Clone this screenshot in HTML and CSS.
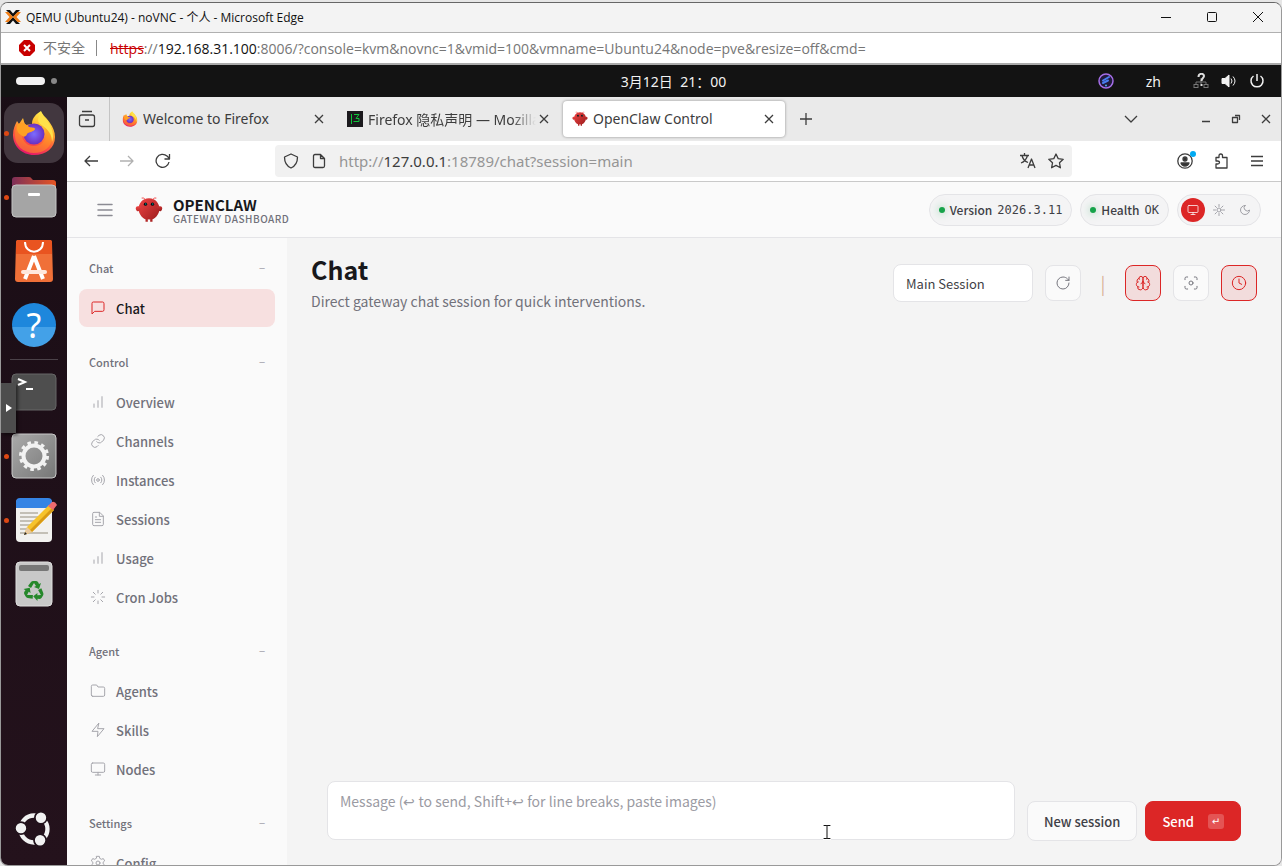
FILE: index.html
```html
<!DOCTYPE html>
<html lang="zh-CN">
<head>
    <meta charset="UTF-8">
    <meta name="viewport" content="width=device-width, initial-scale=1.0">
    <title>QEMU (Ubuntu24) - noVNC</title>
    <link rel="stylesheet" href="styles.css">
</head>
<body>
    <!-- shared icons -->
    <svg class="defs" aria-hidden="true">
        <defs>
            <linearGradient id="fox-body" x1="0.7" y1="0" x2="0.3" y2="1">
                <stop offset="0" stop-color="#fff44f"/>
                <stop offset="0.35" stop-color="#ffb02e"/>
                <stop offset="0.65" stop-color="#ff5a3c"/>
                <stop offset="1" stop-color="#e3106f"/>
            </linearGradient>
            <radialGradient id="fox-globe">
                <stop offset="0" stop-color="#7a6cff"/>
                <stop offset="1" stop-color="#6b2fc0"/>
            </radialGradient>
            <linearGradient id="claw-body" x1="0" y1="0" x2="1" y2="1">
                <stop offset="0" stop-color="#ef4444"/>
                <stop offset="1" stop-color="#991b1b"/>
            </linearGradient>
            <linearGradient id="grey" x1="0" y1="0" x2="1" y2="1">
                <stop offset="0" stop-color="#aaa"/>
                <stop offset="1" stop-color="#777"/>
            </linearGradient>
            <linearGradient id="folder-back">
                <stop offset="0" stop-color="#7d2f58"/>
                <stop offset="1" stop-color="#e65523"/>
            </linearGradient>
        </defs>
        <symbol id="i-firefox" viewBox="0 0 44 46">
            <path fill="url(#fox-body)" d="M29 1c2 5 6 7 9 12 3 4 5 9 5 14 0 11-9 18-21 18S1 36 1 25c0-6 2-10 4-14l2 3 4-6c1 3 1 5 3 7l6-1c0-6 4-10 9-13z"/>
            <circle cx="22" cy="24" r="10.500" fill="url(#fox-globe)"/>
            <path fill="#ff9a1f" d="M5 15c4-3 9-1 12 2 2 1 5 0 6 2-1 3-7 3-8 5-1 3-3 3-5 2 1 6 6 10 12 10 6 0 11-4 12-10 1-5-1-10-5-13 7 2 12 8 11 16-1 8-8 14-18 14C11 43 3 35 3 26c0-5 1-8 2-11z" opacity="0.500"/>
            <path fill="#ffa024" d="M6 14c4-2 8 0 11 3 2 1 6 0 6 2-1 3-7 3-8 5-1 3-4 3-6 1-4-2-5-7-3-11z"/>
            <path fill="#ffe14a" d="M29 2c2 5 6 8 9 13 3 6 4 12 2 17 0-8-4-12-9-16-5-3-7-6-2-14z"/>
        </symbol>
        <symbol id="i-claw" viewBox="0 0 120 120">
            <path fill="url(#claw-body)" d="M60 10C30 10 15 35 15 55s15 40 30 45v10h10v-10s5 2 10 0v10h10v-10c15-5 30-25 30-45S90 10 60 10z"/>
            <path fill="url(#claw-body)" d="M20 45C5 40 0 50 5 60s15 5 20-5-1-9-5-10zM100 45c15-5 20 5 15 15s-15 5-20-5 1-9 5-10z"/>
            <path d="M45 15Q35 5 30 8M75 15Q85 5 90 8" stroke="#ef4444" stroke-width="4" fill="none" stroke-linecap="round"/>
            <circle cx="45" cy="35" r="7" fill="#050810"/>
            <circle cx="75" cy="35" r="7" fill="#050810"/>
            <circle cx="46" cy="34" r="3" fill="#00a896"/>
            <circle cx="76" cy="34" r="3" fill="#00a896"/>
        </symbol>
        <symbol id="i-x" viewBox="0 0 16 16"><path d="M4 4l8 8M12 4l-8 8"/></symbol>
        <symbol id="i-bars" viewBox="0 0 24 24"><path d="M6 20v-5M12 20V10M18 20V4"/></symbol>
        <symbol id="i-monitor" viewBox="0 0 24 24"><rect x="2" y="3" width="20" height="14" rx="2"/><path d="M8 21h8M12 17v4"/></symbol>
    </svg>

    <div class="window">
        <header class="titlebar">
            <svg class="proxmox" viewBox="0 0 16 16"><path d="M1 1h4l3 3.500L11 1h4L8 8zM1 15h4l3-3.500L11 15h4L8 8z" fill="#111"/><path d="M0 3h3.500L8 8l-4.500 5H0l4.500-5zM16 3h-3.500L8 8l4.500 5H16l-4.500-5z" fill="#ef7d16"/></svg>
            <span class="window-title">QEMU (Ubuntu24) - noVNC - 个人 - Microsoft Edge</span>
            <div class="window-buttons">
                <button type="button" aria-label="Minimize"><svg viewBox="0 0 12 12"><path d="M1 6.500h10"/></svg></button>
                <button type="button" aria-label="Maximize"><svg viewBox="0 0 12 12"><rect x="1.500" y="1.500" width="9" height="9" rx="1"/></svg></button>
                <button type="button" aria-label="Close"><svg viewBox="0 0 12 12"><path d="M1 1l10 10M11 1L1 11"/></svg></button>
            </div>
        </header>
        <div class="addressbar">
            <svg class="unsafe" viewBox="0 0 16 16"><path d="M5 0h6l5 5v6l-5 5H5l-5-5V5z" fill="#c80000"/><path d="M5 5l6 6M11 5l-6 6" stroke="#fff" stroke-width="2"/></svg>
            <span class="unsafe-label">不安全</span>
            <span class="address"><s>https</s>://<b>192.168.31.100</b>:8006/?console=kvm&amp;novnc=1&amp;vmid=100&amp;vmname=Ubuntu24&amp;node=pve&amp;resize=off&amp;cmd=</span>
        </div>

        <div class="desktop">
            <div class="topbar">
                <div class="workspaces"><i class="ws-active"></i><i class="ws-dot"></i></div>
                <time class="clock">3月12日&nbsp; 21：00</time>
                <div class="tray">
                    <svg class="tray-app" viewBox="0 0 16 16"><circle cx="8" cy="8" r="7" fill="#211a3d" stroke="#a56ee8" stroke-width="1.500"/><path d="M5 7.500l6-3.500M5 10l5-2.500" stroke="#4a7df0" stroke-width="2" stroke-linecap="round"/><circle cx="8" cy="12.500" r="1" fill="#4ab0f0"/></svg>
                    <span class="lang">zh</span>
                    <svg viewBox="0 0 16 16" fill="none" stroke="#777"><path d="M8 5v6M3 11V9h10v2"/><rect x="1" y="11.500" width="4" height="3"/><rect x="11" y="11.500" width="4" height="3"/><path d="M5.500 4c0-4 5.500-4 5.500-1 0 2-2.500 2-2.500 5M8.500 11v2" stroke="#ddd" stroke-width="2"/></svg>
                    <svg viewBox="0 0 16 16" fill="none" stroke="#f2f2f2"><path d="M1 5.500h3L8 2v12l-4-3.500H1z" fill="#f2f2f2"/><path d="M10 5.500q2 2.500 0 5M12 3.500q4 4.500 0 9"/></svg>
                    <svg viewBox="0 0 16 16" fill="none" stroke="#f2f2f2" stroke-width="1.500"><path d="M8 1v7M4.500 3a6 6 0 1 0 7 0"/></svg>
                </div>
            </div>

            <div class="workspace">
                <nav class="dock" aria-label="Dock">
                    <a href="#" class="dock-item current running" aria-label="Firefox"><svg viewBox="0 0 44 46"><use href="#i-firefox"/></svg></a>
                    <a href="#" class="dock-item running" aria-label="Files">
                        <svg viewBox="0 0 46 46"><path d="M1 20V6q0-3 3-3h14q2 0 3 2l1 1h20q3 0 3 3v11z" fill="url(#folder-back)"/><rect x="1" y="11" width="44" height="32" rx="4" fill="#a5a5a5" stroke="#c4c4c4"/><rect x="17" y="19" width="12" height="3" rx="1" fill="#fff"/></svg>
                    </a>
                    <a href="#" class="dock-item" aria-label="App Center">
                        <svg viewBox="0 0 46 46"><path d="M7 2h32q2 0 2 3l1 36q0 3-3 3H7q-3 0-3-3L5 5q0-3 2-3z" fill="#f07038"/><path d="M7 2h32q2 0 2 3v11H5V5q0-3 2-3z" fill="#e95420"/><path d="M14 4c0 13 18 13 18 0" fill="none" stroke="#fff" stroke-width="2"/><path d="M23 18l-9 23M23 18l9 23" stroke="#fff" stroke-width="4"/><path d="M12 34h22" stroke="#ffe8dc" stroke-width="4" stroke-linecap="round"/></svg>
                    </a>
                    <a href="#" class="dock-item" aria-label="Help"><span class="help-icon">?</span></a>
                    <hr class="dock-line">
                    <a href="#" class="dock-item" aria-label="Terminal">
                        <svg viewBox="0 0 46 46"><rect x="1" y="5" width="44" height="36" rx="4" fill="#4e4e4e" stroke="#666"/><path d="M7 10l7 3-7 3M15 20h7" fill="none" stroke="#fff" stroke-width="2"/></svg>
                    </a>
                    <a href="#" class="dock-item running" aria-label="Settings">
                        <svg viewBox="0 0 46 46"><rect x="1" y="1" width="44" height="44" rx="4" fill="url(#grey)" stroke="#c8c8c8"/><circle cx="23" cy="23" r="10.500" fill="none" stroke="#f2f2f2" stroke-width="4"/><circle cx="23" cy="23" r="13.500" fill="none" stroke="#f2f2f2" stroke-width="3" stroke-dasharray="3.600 3.468"/></svg>
                    </a>
                    <a href="#" class="dock-item running" aria-label="Text Editor">
                        <svg viewBox="0 0 46 46"><rect x="5" y="2" width="36" height="43" rx="4" fill="#f2f1ef"/><path d="M9 1h28q4 0 4 4v6H5V5q0-4 4-4z" fill="#3584e4"/><path d="M9 16h18M9 20h24M9 24h20M9 28h18M9 32h14M9 36h28" stroke="#c3bfb6" stroke-width="2"/><path d="M13 38l3-8L38 8l5 5-22 22z" fill="#f6c32c"/><path d="M19 33L41 11l2 2-22 22z" fill="#d99a14"/><path d="M13 38l3-8 5 5z" fill="#e9c9a0"/><path d="M13 38l1-3 2 2z" fill="#222"/><path d="M37 9l4-4q3-1 5 3l-4 5z" fill="#ed6a6f"/></svg>
                    </a>
                    <a href="#" class="dock-item" aria-label="Trash">
                        <svg viewBox="0 0 46 46">
                            <rect x="5" y="1" width="36" height="44" rx="4" fill="#c8c8c8" stroke="#dedede"/>
                            <rect x="8" y="4" width="30" height="6" rx="2" fill="#777"/>
                            <g id="recycle" fill="#26882b"><path d="M17 25l3-4q1-1 2-1h3q1 0 2 1l1 2 2-1-2 6-5-2 2-1-2-3-3 5z"/></g>
                            <use href="#recycle" transform="rotate(120 23 30)"/>
                            <use href="#recycle" transform="rotate(240 23 30)"/>
                        </svg>
                    </a>
                    <a href="#" class="dock-item dock-apps" aria-label="Show Apps">
                        <svg viewBox="0 0 46 46"><circle cx="23" cy="23" r="15.500" fill="none" stroke="#f2f2f2" stroke-width="5"/><g fill="#f2f2f2" stroke="#22131c" stroke-width="2"><circle cx="8" cy="22" r="7"/><circle cx="31" cy="10" r="7"/><circle cx="30" cy="36" r="7"/></g></svg>
                    </a>
                    <button type="button" class="vnc-handle" aria-label="noVNC panel"><svg viewBox="0 0 6 8"><path d="M0 0l6 4-6 4z" fill="#fff"/></svg></button>
                </nav>

                <div class="firefox">
                    <div class="tabstrip">
                        <button type="button" class="tab-list" aria-label="Recent browsing"><svg class="line" viewBox="0 0 18 18"><rect x="1.500" y="5" width="15" height="11.500" rx="2"/><path d="M4 1.500h10M7 10h4"/></svg></button>
                        <div class="tab">
                            <svg class="favicon" viewBox="0 0 44 46"><use href="#i-firefox"/></svg>
                            <span class="tab-text">Welcome to Firefox</span>
                            <button type="button" class="tab-close" aria-label="Close tab"><svg class="line"><use href="#i-x"/></svg></button>
                        </div>
                        <div class="tab">
                            <svg class="favicon" viewBox="0 0 16 16"><path d="M0 0h16v16H0z" fill="#1c1a1e"/><path d="M4.500 3v10M7 3.500h5L9 7.500h3v3H6.500" fill="none" stroke="#0fc43a"/></svg>
                            <span class="tab-text fade">Firefox 隐私声明 — Mozilla</span>
                            <button type="button" class="tab-close" aria-label="Close tab"><svg class="line"><use href="#i-x"/></svg></button>
                        </div>
                        <div class="tab active">
                            <svg class="favicon" viewBox="0 0 120 120"><use href="#i-claw"/></svg>
                            <span class="tab-text">OpenClaw Control</span>
                            <button type="button" class="tab-close" aria-label="Close tab"><svg class="line"><use href="#i-x"/></svg></button>
                        </div>
                        <button type="button" class="new-tab" aria-label="New tab"><svg class="line" viewBox="0 0 16 16"><path d="M8 2v12M2 8h12"/></svg></button>
                        <div class="tab-controls">
                            <button type="button" class="all-tabs" aria-label="List all tabs"><svg class="line" viewBox="0 0 16 16"><path d="M2 5l6 6 6-6"/></svg></button>
                            <button type="button" aria-label="Minimize"><svg class="line" viewBox="0 0 16 16"><path d="M4 10.500h8"/></svg></button>
                            <button type="button" aria-label="Restore"><svg class="line" viewBox="0 0 16 16"><path d="M4.500 6.500h5v5h-5zM7 4.500h4.500V9"/></svg></button>
                            <button type="button" aria-label="Close"><svg class="line"><use href="#i-x"/></svg></button>
                        </div>
                    </div>

                    <div class="toolbar">
                        <button type="button" aria-label="Back"><svg class="line" viewBox="0 0 16 16"><path d="M15 8H2M7 3L2 8l5 5"/></svg></button>
                        <button type="button" aria-label="Forward" disabled><svg class="line" viewBox="0 0 16 16"><path d="M1 8h13M9 3l5 5-5 5"/></svg></button>
                        <button type="button" aria-label="Reload"><svg class="line" viewBox="0 0 16 16"><path d="M14 9a6.500 6.500 0 1 1-2-6l2 2M14.500 1v5h-5"/></svg></button>
                        <div class="urlbar">
                            <svg class="line" viewBox="0 0 16 16"><path d="M8 1l6.500 3c0 5-2 9-6.500 11C3.500 13 1.500 9 1.500 4z"/></svg>
                            <svg class="line" viewBox="0 0 16 16"><path d="M4 1.500h5.500l4 4V13q0 1.500-1.500 1.500H4q-1.500 0-1.500-1.500V3Q2.500 1.500 4 1.500zM9.500 1.500v4h4"/></svg>
                            <span class="url">http://<b>127.0.0.1</b>:18789/chat?session=main</span>
                            <svg class="line" viewBox="0 0 16 16"><path d="M0 2.500h9M4.500 0v2.500M2 2.500q1 5 6 7M7.500 2.500Q6 8 1 10M8 15l3.500-9L15 15M9.500 12h4"/></svg>
                            <svg class="line" viewBox="0 0 16 16"><path d="M8 1l2.200 4.600 5 .7-3.700 3.500.9 5L8 12.400l-4.400 2.400.9-5L.8 6.300l5-.7z"/></svg>
                        </div>
                        <button type="button" class="account" aria-label="Account"><svg class="line" viewBox="0 0 16 16"><circle cx="8" cy="8" r="7.200"/><circle cx="8" cy="6" r="2" fill="#333"/><path d="M4 10h8q-1 3-4 3t-4-3z" fill="#333"/></svg></button>
                        <button type="button" aria-label="Extensions"><svg class="line" viewBox="0 0 16 16"><path d="M6 4.500V3q0-2 1.800-2T9.500 3v1.500H14V15H3v-4h1.500q2 0 2-1.500T4.500 8H3V4.500z"/></svg></button>
                        <button type="button" aria-label="Menu"><svg class="line" viewBox="0 0 16 16"><path d="M2 3.500h12M2 8h12M2 12.500h12"/></svg></button>
                    </div>

                    <div class="app">
                        <header class="app-header">
                            <button type="button" class="menu-toggle" aria-label="Collapse sidebar"><svg viewBox="0 0 16 16"><path d="M1 2.500h14M1 8h14M1 13.500h14"/></svg></button>
                            <svg class="brand-logo" viewBox="0 0 120 120"><use href="#i-claw"/></svg>
                            <div class="brand">
                                <strong>OPENCLAW</strong>
                                <span>GATEWAY DASHBOARD</span>
                            </div>
                            <div class="status">
                                <div class="pill"><i class="dot"></i><span>Version</span><code>2026.3.11</code></div>
                                <div class="pill"><i class="dot"></i><span>Health</span><code>OK</code></div>
                                <div class="theme">
                                    <button type="button" class="on" aria-label="System theme"><svg><use href="#i-monitor"/></svg></button>
                                    <button type="button" aria-label="Light theme"><svg viewBox="0 0 24 24"><circle cx="12" cy="12" r="4"/><path d="M12 1v4M12 19v4M1 12h4M19 12h4M4.200 4.200L7 7M17 17l2.800 2.800M4.200 19.800L7 17M17 7l2.800-2.800"/></svg></button>
                                    <button type="button" aria-label="Dark theme"><svg viewBox="0 0 24 24"><path d="M12 3a6 6 0 0 0 9 9 9 9 0 1 1-9-9z"/></svg></button>
                                </div>
                            </div>
                        </header>

                        <div class="app-body">
                            <nav class="sidebar" aria-label="Dashboard">
                                <section class="nav-group">
                                    <button type="button" class="nav-label">Chat <span>−</span></button>
                                    <a href="#" class="nav-item active"><svg viewBox="0 0 24 24"><path d="M21 15a2 2 0 0 1-2 2H7l-4 4V5a2 2 0 0 1 2-2h14a2 2 0 0 1 2 2z"/></svg>Chat</a>
                                </section>
                                <section class="nav-group">
                                    <button type="button" class="nav-label">Control <span>−</span></button>
                                    <a href="#" class="nav-item"><svg><use href="#i-bars"/></svg>Overview</a>
                                    <a href="#" class="nav-item"><svg viewBox="0 0 24 24"><path d="M10 13a5 5 0 0 0 7.500.500l3-3a5 5 0 0 0-7-7l-1.800 1.700"/><path d="M14 11a5 5 0 0 0-7.500-.500l-3 3a5 5 0 0 0 7 7l1.700-1.700"/></svg>Channels</a>
                                    <a href="#" class="nav-item"><svg viewBox="0 0 24 24"><circle cx="12" cy="12" r="2"/><path d="M16.200 7.800a6 6 0 0 1 0 8.400M7.800 16.200a6 6 0 0 1 0-8.400M19 5a10 10 0 0 1 0 14M5 19A10 10 0 0 1 5 5"/></svg>Instances</a>
                                    <a href="#" class="nav-item"><svg viewBox="0 0 24 24"><path d="M14 2H6a2 2 0 0 0-2 2v16a2 2 0 0 0 2 2h12a2 2 0 0 0 2-2V8zM14 2v6h6M16 13H8M16 17H8M10 9H8"/></svg>Sessions</a>
                                    <a href="#" class="nav-item"><svg><use href="#i-bars"/></svg>Usage</a>
                                    <a href="#" class="nav-item"><svg viewBox="0 0 24 24"><path d="M12 2v4M12 18v4M4.900 4.900l2.900 2.900M16.200 16.200l2.900 2.900M2 12h4M18 12h4M4.900 19.100l2.900-2.900M16.200 7.800l2.900-2.900"/></svg>Cron Jobs</a>
                                </section>
                                <section class="nav-group">
                                    <button type="button" class="nav-label">Agent <span>−</span></button>
                                    <a href="#" class="nav-item"><svg viewBox="0 0 24 24"><path d="M4 20h16a2 2 0 0 0 2-2V8a2 2 0 0 0-2-2h-8L10 3H4a2 2 0 0 0-2 2v13a2 2 0 0 0 2 2z"/></svg>Agents</a>
                                    <a href="#" class="nav-item"><svg viewBox="0 0 24 24"><path d="M13 2L3 14h9l-1 8 10-12h-9z"/></svg>Skills</a>
                                    <a href="#" class="nav-item"><svg><use href="#i-monitor"/></svg>Nodes</a>
                                </section>
                                <section class="nav-group">
                                    <button type="button" class="nav-label">Settings <span>−</span></button>
                                    <a href="#" class="nav-item"><svg viewBox="0 0 24 24"><circle cx="12" cy="12" r="3"/><path d="M10 2h4l.600 3 2.400 1.400 3-1 2 3.400-2.300 2v2.400l2.300 2-2 3.400-3-1-2.400 1.400-.600 3h-4l-.600-3L7 17.600l-3 1-2-3.400 2.300-2v-2.400L2 8.800l2-3.400 3 1L9.400 5z"/></svg>Config</a>
                                </section>
                            </nav>

                            <main class="chat">
                                <div class="chat-head">
                                    <div class="chat-title">
                                        <h1>Chat</h1>
                                        <p>Direct gateway chat session for quick interventions.</p>
                                    </div>
                                    <div class="chat-tools">
                                        <select class="session" aria-label="Session"><option>Main Session</option></select>
                                        <button type="button" class="tool" aria-label="Refresh"><svg viewBox="0 0 24 24"><path d="M21 12a9 9 0 1 1-9-9c2.500 0 5 1 6.700 2.700L21 8M21 3v5h-5"/></svg></button>
                                        <span class="divider">|</span>
                                        <button type="button" class="tool on" aria-label="Toggle thinking"><svg viewBox="0 0 24 24"><path d="M12 5a3 3 0 1 0-6 .100 4 4 0 0 0-2.500 5.800 4 4 0 0 0 .600 6.600A4 4 0 1 0 12 18zM12 5a3 3 0 1 1 6 .100 4 4 0 0 1 2.500 5.800 4 4 0 0 1-.600 6.600A4 4 0 1 1 12 18zM15 13a4.500 4.500 0 0 1-3-4 4.500 4.500 0 0 1-3 4M17.600 6.500q.500-.600.400-1.400M6 5.100q0 .800.400 1.400M3.500 10.900l1.500-.500M20.500 10.900l-1.500-.500M6 18l-1.900-.500M18 18l1.900-.500"/></svg></button>
                                        <button type="button" class="tool" aria-label="Focus mode"><svg viewBox="0 0 24 24"><circle cx="12" cy="12" r="3"/><path d="M3 7V5a2 2 0 0 1 2-2h2M17 3h2a2 2 0 0 1 2 2v2M21 17v2a2 2 0 0 1-2 2h-2M7 21H5a2 2 0 0 1-2-2v-2"/></svg></button>
                                        <button type="button" class="tool on" aria-label="Toggle cron sessions"><svg viewBox="0 0 24 24"><circle cx="12" cy="12" r="10"/><path d="M12 6v6l4 2"/></svg></button>
                                    </div>
                                </div>
                                <form class="compose">
                                    <textarea aria-label="Message" placeholder="Message (↩ to send, Shift+↩ for line breaks, paste images)"></textarea>
                                    <button type="button" class="btn">New session</button>
                                    <button type="button" class="btn primary">Send <kbd>↵</kbd></button>
                                </form>
                                <svg class="pointer" viewBox="0 0 8 16"><path d="M1 1.500h6M1 14.500h6M4 2v12" stroke="#fff" stroke-width="3"/><path d="M1 1.500h2.500M4.500 1.500H7M1 14.500h2.500M4.500 14.500H7M4 2v12" stroke="#111"/></svg>
                            </main>
                        </div>
                    </div>
                </div>
            </div>
        </div>
    </div>
</body>
</html>
```
FILE: styles.css
```css
* {
    box-sizing: border-box;
}
body {
    margin: 0;
    height: 100vh;
    padding-top: 2px;
    background-color: #e6e6e6;
    font-family: 'Noto Sans', 'Noto Sans CJK SC', sans-serif;
}
button {
    display: flex;
    align-items: center;
    justify-content: center;
    padding: 0;
    border: 0;
    background: none;
    color: inherit;
    font: inherit;
}
a {
    color: inherit;
    text-decoration: none;
}
svg {
    display: block;
    flex: none;
    width: 16px;
    height: 16px;
}
.defs {
    position: absolute;
    width: 0;
    height: 0;
}
.line {
    fill: none;
    stroke: #3d3d3d;
    stroke-width: 1.3;
    stroke-linejoin: round;
}

/* host window */
.window {
    display: flex;
    flex-direction: column;
    height: 100%;
    border: 1px solid #999;
    border-top-color: #666;
    border-radius: 8px;
    overflow: hidden;
    background-color: #fff;
}
.titlebar {
    display: flex;
    align-items: center;
    gap: 5px;
    height: 30px;
    padding: 0 0 2px 4px;
    border-bottom: 1px solid #b0b0b0;
    background-color: #f3f3f3;
    color: #111;
    font-family: 'Open Sans', 'Noto Sans CJK SC', sans-serif;
    font-size: 12px;
}
.window-buttons {
    display: flex;
    margin-left: auto;
}
.window-buttons button {
    width: 46px;
    height: 28px;
}
.window-buttons svg {
    width: 12px;
    height: 12px;
    fill: none;
    stroke: #111;
}
.addressbar {
    display: flex;
    align-items: center;
    height: 32px;
    padding-left: 18px;
    border-bottom: 2px solid #aaa;
    color: #767676;
    font-family: 'Open Sans', 'Noto Sans CJK SC', sans-serif;
    font-size: 14px;
}
.unsafe-label {
    margin-left: 8px;
    padding-right: 11px;
    border-right: 1px solid #888;
    line-height: 16px;
}
.address {
    margin-left: 13px;
    white-space: nowrap;
}
.address s {
    color: #c80000;
}
.address b {
    color: #111;
    font-weight: 400;
}

/* ubuntu desktop */
.desktop {
    display: flex;
    flex-direction: column;
    flex: 1;
    min-height: 0;
    background: linear-gradient(#190d15, #24121c);
}
.topbar {
    display: grid;
    grid-template-columns: 1fr auto 1fr;
    align-items: center;
    height: 32px;
    padding: 0 16px 0 15px;
    background-color: #131313;
    color: #f2f2f2;
    font-size: 14px;
}
.workspaces {
    display: flex;
    align-items: center;
    gap: 6px;
}
.ws-active {
    width: 29px;
    height: 8px;
    border-radius: 4px;
    background-color: #f2f2f2;
}
.ws-dot {
    width: 6px;
    height: 6px;
    border-radius: 50%;
    background-color: #888;
}
.clock {
    margin-left: 66px;
}
.tray {
    display: flex;
    align-items: center;
    justify-content: flex-end;
    gap: 12px;
}
.lang {
    margin: 0 20px;
}
.workspace {
    display: flex;
    flex: 1;
    min-height: 0;
}
.dock {
    position: relative;
    display: flex;
    flex-direction: column;
    align-items: center;
    width: 66px;
    padding: 6px 3px;
}
.dock-item {
    position: relative;
    display: flex;
    align-items: center;
    justify-content: center;
    width: 60px;
    height: 60px;
    margin-bottom: 4px;
    border-radius: 14px;
}
.dock-item svg {
    width: 46px;
    height: 46px;
}
.dock-item.current {
    background-color: #42373f;
}
.dock-item.running::before {
    content: "";
    position: absolute;
    left: 0;
    top: 28px;
    width: 5px;
    height: 5px;
    border-radius: 50%;
    background-color: #dd4814;
}
.help-icon {
    width: 44px;
    height: 44px;
    border-radius: 50%;
    background: linear-gradient(#1e87dc 55%, #43a1e8 55%);
    color: #fff;
    font-size: 34px;
    line-height: 44px;
    text-align: center;
}
.dock-line {
    width: 48px;
    margin: 0 0 2px;
    border: 0;
    border-top: 1px solid #4b4249;
}
.dock-item.dock-apps {
    margin: auto 0 0;
}
.dock-apps svg {
    width: 40px;
    height: 40px;
}
.vnc-handle {
    position: absolute;
    left: 0;
    top: 286px;
    width: 15px;
    height: 50px;
    background-color: #4d4d4d;
    box-shadow: 2px 2px 3px rgba(0, 0, 0, 0.5);
}
.vnc-handle svg {
    width: 6px;
    height: 8px;
}

/* firefox */
.firefox {
    display: flex;
    flex-direction: column;
    flex: 1;
    min-width: 0;
    background-color: #fff;
    color: #3d3d3d;
    font-size: 15px;
}
.tabstrip {
    display: flex;
    align-items: center;
    gap: 3px;
    height: 44px;
    background-color: #eaeaea;
    font-size: 14px;
}
.tab-list {
    width: 43px;
    height: 44px;
    padding-right: 2px;
    border-right: 1px solid #c4c4c4;
}
.tab-list svg {
    width: 18px;
    height: 18px;
}
.tab {
    display: flex;
    align-items: center;
    width: 222px;
    height: 36px;
    padding: 0 8px 0 9px;
    border-radius: 4px;
}
.tab.active {
    background-color: #fff;
    box-shadow: 0 0 3px rgba(0, 0, 0, 0.4);
}
.tab-text {
    flex: 1;
    margin-left: 5px;
    padding-bottom: 1px;
    overflow: hidden;
    white-space: nowrap;
}
.tab-text.fade {
    mask-image: linear-gradient(to left, transparent, #000 24px);
}
.new-tab {
    width: 36px;
    height: 36px;
}
.tab-controls {
    display: flex;
    gap: 14px;
    margin-left: auto;
    padding-right: 7px;
}
.all-tabs {
    margin-right: 45px;
}
.toolbar {
    display: flex;
    align-items: center;
    height: 41px;
    padding: 0 6px;
    border-bottom: 1px solid #c9c9c9;
}
.toolbar button {
    width: 36px;
    height: 36px;
}
.toolbar button:disabled {
    opacity: 0.4;
}
.urlbar {
    display: flex;
    flex: 1;
    align-items: center;
    gap: 12px;
    height: 32px;
    margin: 0 95px 0 94px;
    padding: 0 8px;
    border-radius: 4px;
    background-color: #f1f1f1;
}
.url {
    flex: 1;
    padding-bottom: 1px;
    color: #959595;
}
.url b {
    color: #3d3d3d;
    font-weight: 400;
}
.account {
    position: relative;
}
.account::after {
    content: "";
    position: absolute;
    right: 7px;
    top: 8px;
    width: 6px;
    height: 6px;
    border-radius: 50%;
    background-color: #00aaf2;
}

/* openclaw dashboard */
.app {
    display: flex;
    flex-direction: column;
    flex: 1;
    min-height: 0;
    background-color: #f4f4f4;
    color: #3f3f46;
    font-family: 'Noto Sans CJK SC', sans-serif;
    font-size: 13px;
}
.app svg {
    stroke-linecap: round;
    stroke-linejoin: round;
}
.app-header {
    display: flex;
    align-items: center;
    height: 56px;
    padding: 0 20px;
    border-bottom: 1px solid #e4e4e7;
    background-color: #fafafa;
}
.menu-toggle {
    width: 36px;
    height: 36px;
}
.menu-toggle svg {
    fill: none;
    stroke: #8b8b93;
    stroke-width: 1.5;
}
.brand-logo {
    width: 28px;
    height: 28px;
    margin: 0 10px 0 12px;
}
.brand {
    display: flex;
    flex-direction: column;
    padding-top: 2px;
}
.brand strong {
    color: #18181b;
    font-size: 15px;
    line-height: 16px;
}
.brand span {
    color: #71717a;
    font-size: 10px;
    font-weight: 500;
    letter-spacing: 0.05em;
    line-height: 12px;
}
.status {
    display: flex;
    gap: 8px;
    margin-left: auto;
}
.pill,
.theme {
    display: flex;
    align-items: center;
    height: 32px;
    border: 1px solid #e4e4e7;
    border-radius: 16px;
    background-color: #f4f4f5;
}
.pill {
    gap: 5px;
    padding: 0 9px;
    font-size: 12px;
    font-weight: 500;
}
.pill code {
    font-family: 'DejaVu Sans Mono', monospace;
    font-size: 12px;
    font-weight: 400;
}
.dot {
    width: 6px;
    height: 6px;
    border-radius: 50%;
    background-color: #16a34a;
    box-shadow: 0 0 8px rgba(22, 163, 74, 0.5);
}
.theme {
    gap: 2px;
    padding: 0 3px;
}
.theme button {
    width: 24px;
    height: 24px;
    border-radius: 50%;
}
.theme svg {
    width: 12px;
    height: 12px;
    fill: none;
    stroke: #85858d;
    stroke-width: 1.5;
}
.theme .on {
    background-color: #dc2626;
}
.theme .on svg {
    stroke: #fff;
}
.app-body {
    display: flex;
    flex: 1;
    min-height: 0;
}
.sidebar {
    width: 220px;
    padding: 13px 12px 0;
    overflow: hidden;
    background-color: #fafafa;
    color: #71717a;
    font-weight: 500;
}
.nav-group {
    display: flex;
    flex-direction: column;
    gap: 1px;
    margin-bottom: 18px;
}
.nav-label {
    justify-content: space-between;
    height: 37px;
    padding: 0 10px 4px;
    font-size: 11px;
}
.nav-label span {
    color: #a1a1aa;
    font-weight: 400;
}
.nav-item {
    display: flex;
    align-items: center;
    gap: 10px;
    height: 38px;
    padding: 0 11px;
    border-radius: 8px;
}
.nav-item svg {
    fill: none;
    stroke: #a6a6ac;
    stroke-width: 1.5;
}
.nav-item.active {
    background-color: #f7e0e0;
    color: #18181b;
}
.nav-item.active svg {
    stroke: #dc2626;
}
.chat {
    position: relative;
    display: flex;
    flex: 1;
    flex-direction: column;
    justify-content: space-between;
    min-width: 0;
    padding: 12px 24px 24px;
}
.chat-head {
    display: flex;
    justify-content: space-between;
}
.chat-title h1 {
    margin: 0;
    color: #18181b;
    font-size: 25px;
    line-height: 39px;
}
.chat-title p {
    margin: 0;
    color: #71717a;
    font-size: 14px;
    line-height: 24px;
}
.chat-tools {
    display: flex;
    align-items: center;
    gap: 12px;
    height: 40px;
    margin-top: 13px;
}
.session {
    width: 140px;
    height: 38px;
    padding: 0 12px;
    border: 1px solid #e4e4e7;
    border-radius: 8px;
    background-color: #fff;
    color: #3f3f46;
    font: inherit;
    appearance: none;
}
.divider {
    width: 20px;
    color: #d9b39a;
    font-size: 18px;
    text-align: center;
}
.tool {
    width: 36px;
    height: 36px;
    border: 1px solid #e4e4e7;
    border-radius: 8px;
    background-color: #fafafa;
}
.tool svg {
    fill: none;
    stroke: #77777f;
    stroke-width: 1.5;
}
.tool.on {
    border-color: #dc2626;
    background-color: #f2dcdc;
}
.tool.on svg {
    stroke: #dc2626;
}
.compose {
    display: flex;
    align-items: flex-end;
    gap: 8px;
    padding: 0 16px;
}
.compose textarea {
    flex: 1;
    height: 59px;
    margin: 0 4px 1px 0;
    padding: 8px 12px;
    border: 1px solid #e4e4e7;
    border-radius: 8px;
    background-color: #fff;
    font: inherit;
    font-size: 14px;
    line-height: 22px;
    resize: none;
}
.compose textarea::placeholder {
    color: #9b9ba3;
}
.btn {
    gap: 14px;
    height: 40px;
    padding: 0 16px;
    border: 1px solid #e4e4e7;
    border-radius: 8px;
    background-color: #fafafa;
    font-weight: 500;
}
.btn.primary {
    border-color: #dc2626;
    background-color: #dc2626;
    color: #fff;
}
.btn kbd {
    width: 16px;
    height: 15px;
    border-radius: 3px;
    background-color: #e45454;
    font-family: 'DejaVu Sans', sans-serif;
    font-size: 10px;
    line-height: 15px;
}
/* mouse pointer of the guest, drawn over the page */
.pointer {
    position: absolute;
    left: 536px;
    bottom: 25px;
    width: 8px;
    height: 16px;
}
```
